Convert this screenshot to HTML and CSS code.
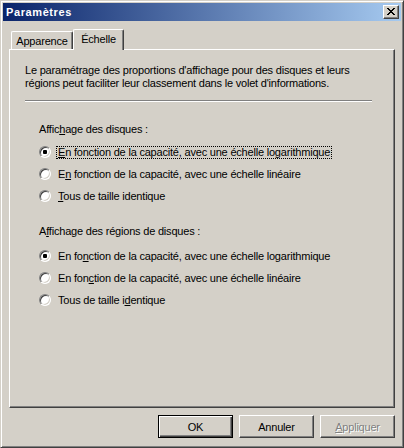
FILE: index.html
```html
<!DOCTYPE html>
<html lang="fr">
<head>
<meta charset="utf-8">
<title>Paramètres</title>
<link rel="stylesheet" href="styles.css">
</head>
<body>
<div class="window">
  <div class="titlebar">
    <span class="title">Paramètres</span>
    <span class="close"><svg width="8" height="7" viewBox="0 0 8 7"><path d="M0 0h2v1H0zM6 0h2v1H6zM1 1h2v1H1zM5 1h2v1H5zM2 2h4v1H2zM3 3h2v1H3zM2 4h4v1H2zM1 5h2v1H1zM5 5h2v1H5zM0 6h2v1H0zM6 6h2v1H6z" fill="#000"/></svg></span>
  </div>
  <div class="content">
    <div class="tabs">
      <div class="tab">Apparence</div>
      <div class="tab active">Échelle</div>
    </div>
    <div class="panel">
      <p class="intro">Le paramétrage des proportions d'affichage pour des disques et leurs régions peut faciliter leur classement dans le volet d'informations.</p>
      <div class="sep"></div>
      <div class="group first">
        <div class="label">Affic<u>h</u>age des disques :</div>
        <div class="option"><span class="radio checked"></span><span class="text focus"><u>E</u>n fonction de la capacité, avec une échelle logarithmique</span></div>
        <div class="option"><span class="radio"></span><span class="text">E<u>n</u> fonction de la capacité, avec une échelle linéaire</span></div>
        <div class="option"><span class="radio"></span><span class="text"><u>T</u>ous de taille identique</span></div>
      </div>
      <div class="group second">
        <div class="label">A<u>f</u>fichage des régions de disques :</div>
        <div class="option"><span class="radio checked"></span><span class="text">En fo<u>n</u>ction de la capacité, avec une échelle logarithmique</span></div>
        <div class="option"><span class="radio"></span><span class="text">En fon<u>c</u>tion de la capacité, avec une échelle linéaire</span></div>
        <div class="option"><span class="radio"></span><span class="text">Tous de taille i<u>d</u>entique</span></div>
      </div>
    </div>
    <div class="buttons">
      <div class="btn default"><span>OK</span></div>
      <div class="btn"><span>Annuler</span></div>
      <div class="btn disabled"><span><u>A</u>ppliquer</span></div>
    </div>
  </div>
</div>
</body>
</html>
```
FILE: styles.css
```css
html, body {
  margin: 0;
  padding: 0;
  background: #d4d0c8;
}
body {
  width: 404px;
  height: 448px;
  overflow: hidden;
  font-family: "Liberation Sans", Arial, sans-serif;
  font-size: 11px;
  letter-spacing: -0.2px;
  color: #000;
}
.window {
  box-sizing: border-box;
  width: 404px;
  height: 448px;
  border: 1px solid;
  border-color: #d4d0c8 #404040 #404040 #d4d0c8;
  box-shadow: inset 1px 1px #fff, inset -1px -1px #808080;
  padding: 2px;
  display: flex;
  flex-direction: column;
  background: #d4d0c8;
}
.titlebar {
  height: 18px;
  flex: none;
  display: flex;
  align-items: center;
  justify-content: space-between;
  padding: 0 2px 0 3px;
  background: linear-gradient(to right, #0a246a, #a6caf0);
}
.title {
  color: #fff;
  font-weight: bold;
  font-size: 11px;
  letter-spacing: 0.6px;
  line-height: 13px;
}
.close {
  box-sizing: border-box;
  width: 16px;
  height: 14px;
  background: #d4d0c8;
  border: 1px solid;
  border-color: #fff #404040 #404040 #fff;
  box-shadow: inset -1px -1px #808080;
  display: flex;
  align-items: center;
  justify-content: center;
  padding: 0 1px 1px 0;
}
.close svg { display: block; }
.content {
  flex: 1;
  display: flex;
  flex-direction: column;
  padding: 8px 6px 7px 6px;
}
.tabs {
  display: flex;
  align-items: flex-end;
  height: 20px;
  padding-left: 2px;
  position: relative;
  z-index: 1;
}
.tab {
  box-sizing: border-box;
  height: 18px;
  width: 62px;
  border: 1px solid;
  border-bottom: none;
  border-color: #fff #404040 #fff #fff;
  box-shadow: inset -1px 0 #808080;
  border-radius: 2px 2px 0 0;
  text-align: center;
  line-height: 18px;
  background: #d4d0c8;
}
.tab.active {
  width: 51px;
  height: 21px;
  margin-bottom: -1px;
  line-height: 19px;
}
.panel {
  box-sizing: border-box;
  height: 359px;
  border: 1px solid;
  border-color: #fff #404040 #404040 #fff;
  box-shadow: inset -1px -1px #808080;
  padding: 14px 22px 0 15px;
}
.intro {
  margin: 0;
  line-height: 13px;
}
.sep {
  height: 1px;
  background: #808080;
  border-bottom: 1px solid #fff;
  margin-top: 10px;
}
.group {
  padding-left: 14px;
}
.group.first { margin-top: 21px; }
.group.second { margin-top: 18px; }
.label {
  line-height: 13px;
  height: 13px;
}
.group.first .label { margin-bottom: 5px; }
.group.second .label { margin-bottom: 7px; }
.option {
  height: 22px;
  display: flex;
  align-items: center;
}
.radio {
  box-sizing: border-box;
  width: 12px;
  height: 12px;
  border-radius: 50%;
  background: #fff;
  border: 1px solid;
  border-color: #808080 #fff #fff #808080;
  box-shadow: inset 1px 1px #404040, inset -1px -1px #d4d0c8;
  display: flex;
  align-items: center;
  justify-content: center;
  flex: none;
}
.radio.checked::after {
  content: "";
  width: 4px;
  height: 4px;
  border-radius: 1px;
  background: #000;
}
.text {
  margin-left: 5px;
  border: 1px dotted transparent;
  padding: 0 1px;
  line-height: 11px;
}
.text.focus {
  border-color: #000;
}
u {
  text-decoration: underline;
  text-underline-offset: 1px;
}
.buttons {
  display: flex;
  justify-content: flex-end;
  gap: 6px;
  margin-top: 7px;
}
.btn {
  box-sizing: border-box;
  width: 75px;
  height: 23px;
  border: 1px solid;
  border-color: #fff #404040 #404040 #fff;
  box-shadow: inset -1px -1px #808080;
  display: flex;
  align-items: center;
  justify-content: center;
}
.btn.default {
  border-color: #000;
  box-shadow: inset 1px 1px #fff, inset -1px -1px #404040, inset -2px -2px #808080;
}
.btn.disabled {
  color: #808080;
  text-shadow: 1px 1px #fff;
}
```
